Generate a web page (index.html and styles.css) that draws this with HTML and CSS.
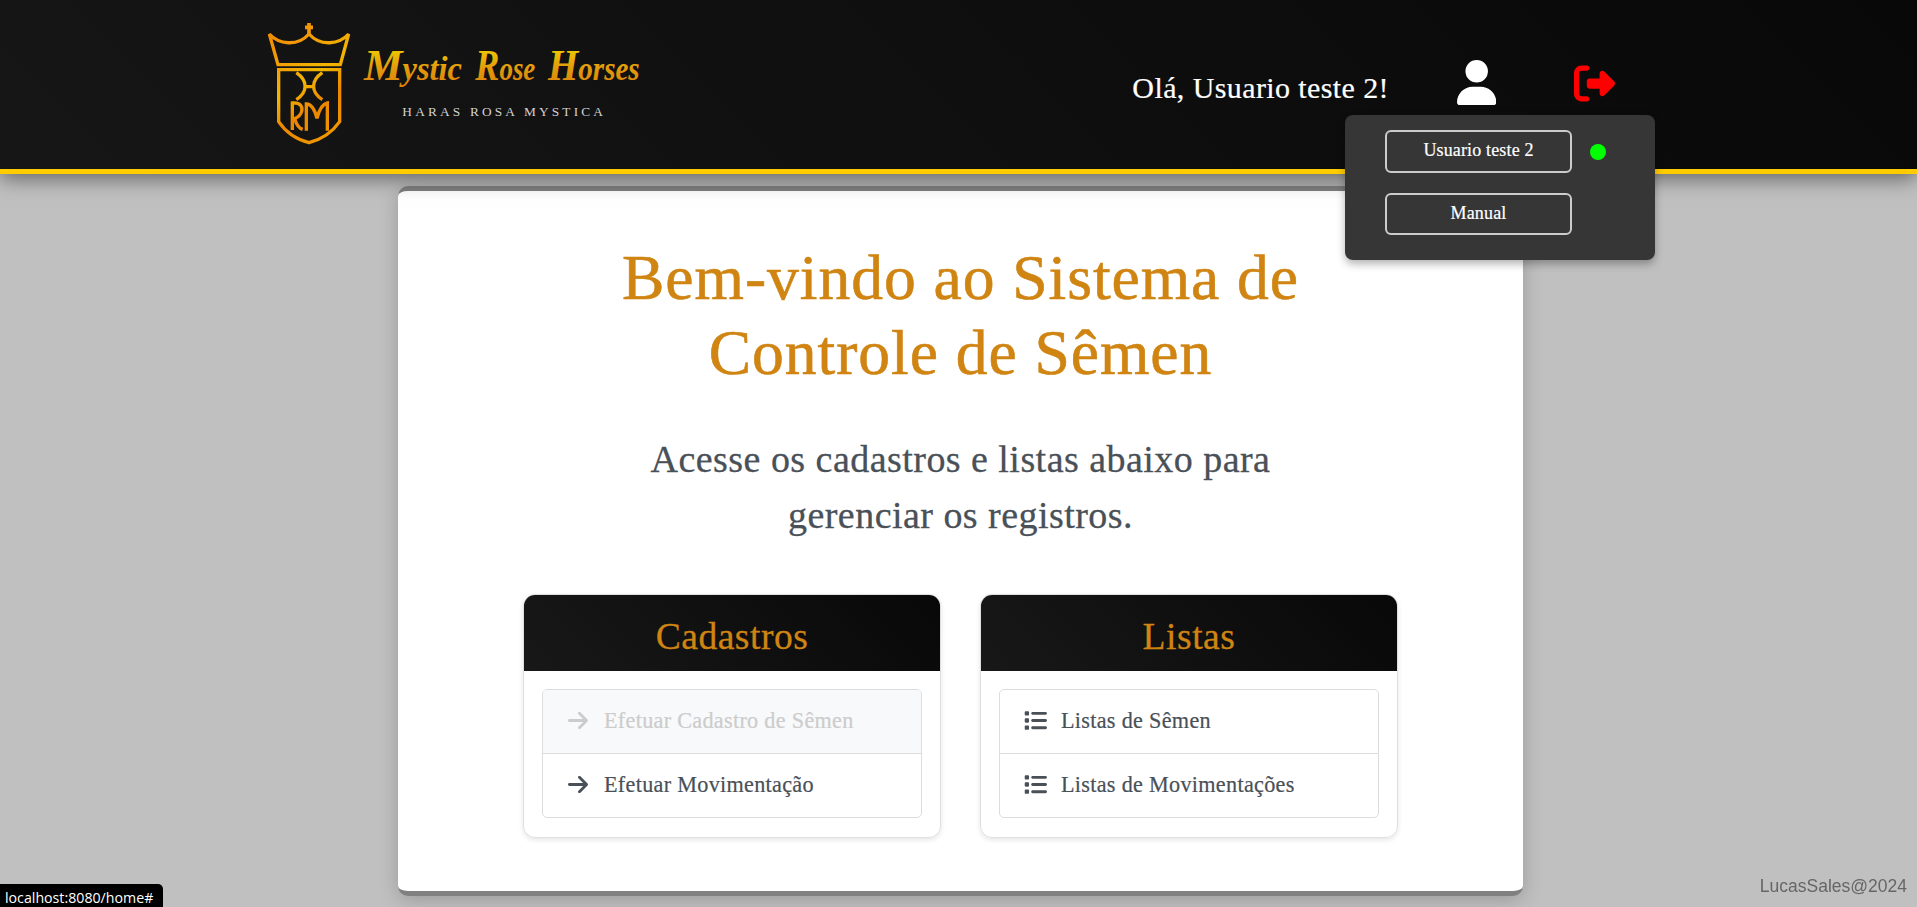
FILE: index.html
```html
<!DOCTYPE html>
<html lang="pt-BR">
<head>
<meta charset="utf-8">
<title>Mystic Rose Horses</title>
<link rel="stylesheet" href="styles.css">
</head>
<body>
<svg class="sprite" width="0" height="0">
  <symbol id="arrow" viewBox="0 0 448 512"><path d="M438.6 278.6c12.5-12.5 12.5-32.8 0-45.3l-160-160c-12.5-12.5-32.8-12.5-45.3 0s-12.5 32.8 0 45.3L338.8 224 32 224c-17.7 0-32 14.3-32 32s14.3 32 32 32l306.7 0L233.4 393.4c-12.5 12.5-12.5 32.8 0 45.3s32.8 12.5 45.3 0l160-160z"/></symbol>
  <symbol id="list" viewBox="0 0 512 512"><path d="M40 48C26.7 48 16 58.7 16 72l0 48c0 13.3 10.7 24 24 24l48 0c13.3 0 24-10.7 24-24l0-48c0-13.3-10.7-24-24-24L40 48zM192 64c-17.7 0-32 14.3-32 32s14.3 32 32 32l288 0c17.7 0 32-14.3 32-32s-14.3-32-32-32L192 64zm0 160c-17.7 0-32 14.3-32 32s14.3 32 32 32l288 0c17.7 0 32-14.3 32-32s-14.3-32-32-32l-288 0zm0 160c-17.7 0-32 14.3-32 32s14.3 32 32 32l288 0c17.7 0 32-14.3 32-32s-14.3-32-32-32l-288 0zM16 232l0 48c0 13.3 10.7 24 24 24l48 0c13.3 0 24-10.7 24-24l0-48c0-13.3-10.7-24-24-24l-48 0c-13.3 0-24 10.7-24 24zM40 368c-13.3 0-24 10.7-24 24l0 48c0 13.3 10.7 24 24 24l48 0c13.3 0 24-10.7 24-24l0-48c0-13.3-10.7-24-24-24l-48 0z"/></symbol>
</svg>
<header class="topbar">
  <svg class="logo" viewBox="0 0 1200 450">
    <defs>
      <linearGradient id="gold" gradientUnits="userSpaceOnUse" x1="60" y1="60" x2="290" y2="400">
        <stop offset="0" stop-color="#f08a00"/><stop offset=".2" stop-color="#f39a08"/><stop offset=".45" stop-color="#f2b600"/><stop offset=".65" stop-color="#ec8600"/><stop offset="1" stop-color="#f0a000"/>
      </linearGradient>
      <linearGradient id="script" gradientUnits="userSpaceOnUse" x1="0" y1="110" x2="0" y2="240">
        <stop offset="0" stop-color="#f0cf00"/><stop offset=".5" stop-color="#e39a0c"/><stop offset="1" stop-color="#d97f08"/>
      </linearGradient>
    </defs>
    <g fill="none" stroke="url(#gold)" stroke-width="10">
      <path d="M165 52H189M177 39V72" stroke-width="11"/>
      <path d="M58 72C86 103 142 111 177 72C212 111 268 103 296 72L271 164H84Z"/>
      <path d="M86 179H269V335C246 368 212 389 177 398C142 389 108 368 86 335Z"/>
      <path d="M139 188C174 212 174 246 139 269M217 188C182 212 182 246 217 269M164 230H192"/>
      <path d="M127 360V279C154 277 158 292 155 304C151 319 141 323 134 326C139 343 146 354 158 358"/>
      <path d="M169 362V282C185 282 195 301 201 325C207 301 217 282 232 279V362"/>
    </g>
    <g class="brand" fill="url(#script)">
      <text x="342" y="211" textLength="294" lengthAdjust="spacingAndGlyphs"><tspan class="initial">M</tspan>ystic</text>
      <text x="676" y="211" textLength="180" lengthAdjust="spacingAndGlyphs"><tspan class="initial">R</tspan>ose</text>
      <text x="894" y="211" textLength="275" lengthAdjust="spacingAndGlyphs"><tspan class="initial">H</tspan>orses</text>
    </g>
    <text class="tagline" x="457" y="319" textLength="602">HARAS ROSA MYSTICA</text>
  </svg>
  <div class="account">
    <span class="greeting">Olá, Usuario teste 2!</span>
    <svg class="user-icon" viewBox="0 0 448 512"><path d="M224 256A128 128 0 1 0 224 0a128 128 0 1 0 0 256zm-45.7 48C79.8 304 0 383.8 0 482.3C0 498.7 13.3 512 29.7 512l388.6 0c16.4 0 29.7-13.3 29.7-29.7C448 383.8 368.2 304 269.7 304l-91.4 0z"/></svg>
    <svg class="exit-icon" viewBox="0 0 512 512"><path d="M377.9 105.9L500.7 228.7c7.2 7.2 11.3 17.1 11.3 27.3s-4.1 20.1-11.3 27.3L377.9 406.1c-6.4 6.4-15 9.9-24 9.9c-18.7 0-33.9-15.2-33.9-33.9l0-62.1-128 0c-17.7 0-32-14.3-32-32l0-64c0-17.7 14.3-32 32-32l128 0 0-62.1c0-18.7 15.2-33.9 33.9-33.9c9 0 17.6 3.6 24 9.9zM160 96L96 96c-17.7 0-32 14.3-32 32l0 256c0 17.7 14.3 32 32 32l64 0c17.7 0 32 14.3 32 32s-14.3 32-32 32l-64 0c-53 0-96-43-96-96L0 128C0 75 43 32 96 32l64 0c17.7 0 32 14.3 32 32s-14.3 32-32 32z"/></svg>
  </div>
  <div class="dropdown">
    <div class="dropdown-row"><a class="dropdown-button">Usuario teste 2</a><span class="online"></span></div>
    <div class="dropdown-row"><a class="dropdown-button manual">Manual</a></div>
  </div>
</header>
<main class="panel">
  <h1 class="title">Bem-vindo ao Sistema de<br>Controle de Sêmen</h1>
  <p class="lead">Acesse os cadastros e listas abaixo para<br>gerenciar os registros.</p>
  <div class="cards">
    <section class="card">
      <h2 class="card-title">Cadastros</h2>
      <div class="menu">
        <a class="item disabled"><svg class="icon arrow"><use href="#arrow"/></svg><span>Efetuar Cadastro de Sêmen</span></a>
        <a class="item"><svg class="icon arrow"><use href="#arrow"/></svg><span>Efetuar Movimentação</span></a>
      </div>
    </section>
    <section class="card">
      <h2 class="card-title">Listas</h2>
      <div class="menu">
        <a class="item"><svg class="icon list"><use href="#list"/></svg><span>Listas de Sêmen</span></a>
        <a class="item"><svg class="icon list"><use href="#list"/></svg><span>Listas de Movimentações</span></a>
      </div>
    </section>
  </div>
</main>
<div class="status">localhost:8080/home#</div>
<div class="credit">LucasSales@2024</div>
</body>
</html>
```

FILE: styles.css
```css
* { box-sizing: border-box; }
body {
  margin: 0;
  height: 907px;
  overflow: hidden;
  background: #c0c0c0;
  font-family: "Liberation Serif", serif;
  color: #495057;
}
.sprite { position: absolute; }
.topbar {
  position: relative;
  z-index: 2;
  height: 174px;
  padding: 10px 302px 0 250px;
  display: flex;
  justify-content: space-between;
  background: linear-gradient(45deg, #161616, #080808);
  border-bottom: 5px solid #ffcc00;
  box-shadow: 0 4px 20px rgba(0, 0, 0, .5);
}
.logo { width: 400px; height: 150px; }
.brand { font-size: 100px; font-style: italic; font-weight: 700; }
.initial { font-size: 134px; }
.tagline { font-size: 40px; fill: #d2d2d2; }
.account { display: flex; align-items: flex-start; }
.greeting {
  margin: 58px 68px 0 0;
  font-size: 30px;
  line-height: 40px;
  letter-spacing: .4px;
  -webkit-text-stroke: .2px;
  color: #fff;
  white-space: nowrap;
}
.user-icon { width: 39.4px; height: 45px; margin: 50px 77.6px 0 0; fill: #fff; }
.exit-icon { width: 41px; height: 41px; margin-top: 52.5px; fill: #f00; }
.dropdown {
  position: absolute;
  left: 1345px;
  top: 115px;
  width: 310px;
  height: 145px;
  padding: 15px 40px;
  display: flex;
  flex-direction: column;
  gap: 20px;
  background: #363636;
  border-radius: 8px;
  box-shadow: 0 4px 8px rgba(0, 0, 0, .3);
}
.dropdown-row { display: flex; align-items: center; gap: 18px; }
.dropdown-button {
  width: 187px;
  height: 43px;
  padding-bottom: 2px;
  border: 2px solid #ccc;
  border-radius: 6px;
  line-height: 37px;
  text-align: center;
  color: #fff;
  font-size: 18px;
  letter-spacing: .15px;
  -webkit-text-stroke: .2px;
}
.manual { height: 42px; }
.online { width: 16px; height: 16px; border-radius: 50%; background: #0f0; }
.panel {
  width: 1125px;
  height: 710px;
  margin: 12px 0 0 398px;
  padding-top: 49px;
  background: #fff;
  border: solid #808080;
  border-width: 5px 0;
  border-radius: 10px;
  box-shadow: 0 4px 20px rgba(0, 0, 0, .2);
  text-align: center;
}
.title {
  margin: 0;
  font-size: 63.6px;
  line-height: 75px;
  font-weight: 400;
  letter-spacing: .95px;
  -webkit-text-stroke: .6px;
  color: #d08412;
}
.lead {
  margin: 41px 0 51px;
  font-size: 38px;
  line-height: 56px;
  letter-spacing: .46px;
  -webkit-text-stroke: .3px;
}
.cards { display: flex; gap: 39px; padding: 0 125px; }
.card {
  flex: 1;
  height: 244px;
  overflow: hidden;
  border: 1px solid #dfdfdf;
  border-radius: 12px;
  box-shadow: 0 2px 5px rgba(0, 0, 0, .1);
}
.card-title {
  margin: 0 0 18px;
  height: 76px;
  padding-top: 4px;
  background: linear-gradient(45deg, #181818, #080808);
  color: #d08412;
  font-size: 37.6px;
  line-height: 76px;
  font-weight: 400;
  letter-spacing: .5px;
  -webkit-text-stroke: .3px;
}
.menu { margin: 0 18px; border: 1px solid #dcdcdc; border-radius: 5px; overflow: hidden; }
.item {
  display: flex;
  align-items: center;
  height: 63px;
  padding: 0 0 2px 25px;
  font-size: 22.2px;
  letter-spacing: .3px;
  -webkit-text-stroke: .2px;
}
.item + .item { height: 64px; border-top: 1px solid #dcdcdc; }
.icon { fill: currentColor; height: 23px; flex: none; }
.disabled { background: #f8f9fa; color: #ccc; }
.arrow { width: 20px; margin-right: 16px; }
.list { width: 23px; margin: 0 14px 0 -1px; }
.status {
  position: fixed;
  left: 0;
  bottom: 0;
  width: 163px;
  height: 23px;
  padding-left: 5px;
  background: #000;
  border-top-right-radius: 5px;
  color: #fff;
  font: 14.2px/27px "Open Sans", sans-serif;
  white-space: nowrap;
}
.credit {
  position: fixed;
  right: 10px;
  bottom: 10px;
  color: #666;
  font: 17.5px/22px "Liberation Sans", sans-serif;
}
```
